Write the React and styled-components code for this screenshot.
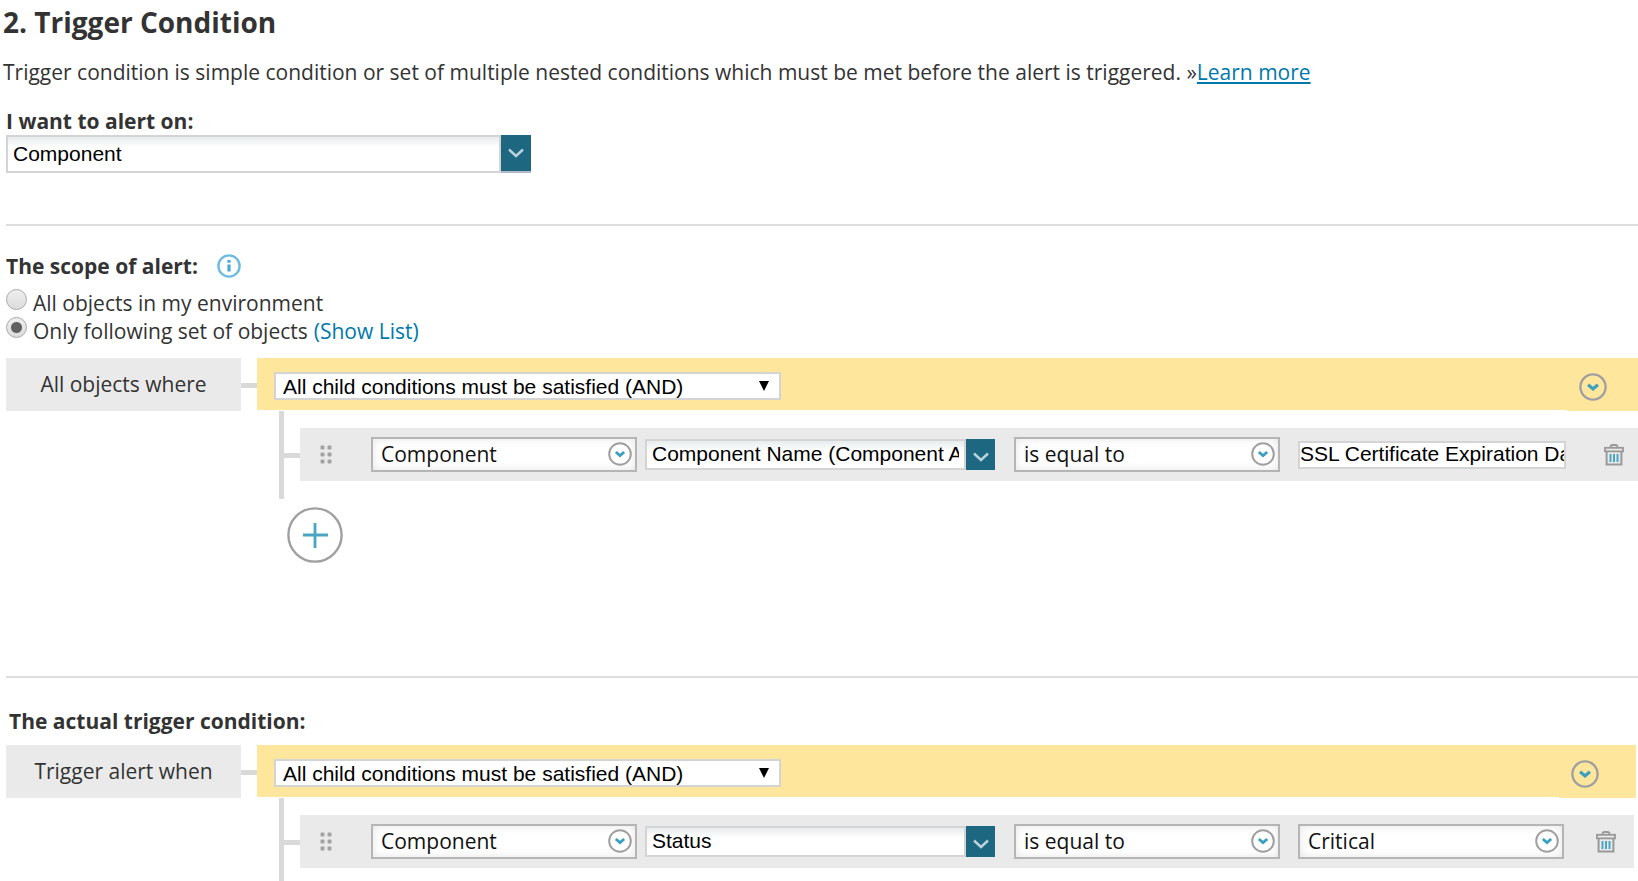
import { useState } from "react";
import styled, { createGlobalStyle } from "styled-components";

function ChevronIcon(){
    return(
        <svg width="16" height="10" viewBox="0 0 16 10" fill="none" aria-hidden="true">
            <path d="M1 1.5L8 8L15 1.5" stroke="#b9d3dc" strokeWidth="2.4"/>
        </svg>
    );
}

function CircleArrow({ size }){
    return(
        <svg width={size} height={size} viewBox="0 0 24 24" fill="none" aria-hidden="true">
            <circle cx="12" cy="12" r="10.8" stroke="#a0a0a0" strokeWidth="2"/>
            <path d="M7.8 10L12 13.6L16.2 10" stroke="#3a9fc0" strokeWidth="2.8"/>
        </svg>
    );
}

function InfoIcon(){
    return(
        <svg width="24" height="24" viewBox="0 0 24 24" fill="none" aria-hidden="true">
            <circle cx="12" cy="12" r="10.6" stroke="#6cbbe0" strokeWidth="2.4"/>
            <path d="M12 6V8.8M12 10.4V17.6" stroke="#4aa9d6" strokeWidth="3.2"/>
        </svg>
    );
}

function GripIcon(){
    return(
        <svg width="12" height="19" viewBox="0 0 12 19" fill="#a3a3a3" aria-hidden="true">
            {[0, 7, 14].map((y) => (
                <g key={y}>
                    <rect x="0.5" y={y + 0.5} width="4" height="4" rx="1"/>
                    <rect x="7.5" y={y + 0.5} width="4" height="4" rx="1"/>
                </g>
            ))}
        </svg>
    );
}

function PlusIcon(){
    return(
        <svg width="56" height="56" viewBox="0 0 56 56" fill="none" aria-hidden="true">
            <circle cx="28" cy="28" r="26.6" stroke="#a0a0a0" strokeWidth="2.4"/>
            <path d="M28 16V41M16 28H41" stroke="#4aa5c4" strokeWidth="2.8"/>
        </svg>
    );
}

function TrashIcon(){
    return(
        <svg width="20" height="22" viewBox="0 0 20 22" fill="none" aria-hidden="true">
            <path d="M6.5 4V3Q6.5 1 8.5 1H11.5Q13.5 1 13.5 3V4" stroke="#999" strokeWidth="1.8"/>
            <rect x="1" y="3.8" width="18" height="3.6" stroke="#999" strokeWidth="1.8"/>
            <path d="M2.6 8V20.6H17.4V8" stroke="#999" strokeWidth="2"/>
            <path d="M6.5 10V18M10 10V18M13.5 10V18" stroke="#4aa5c4" strokeWidth="2"/>
        </svg>
    );
}

function Combo({ id, label, value, wide }){
    const [text, setText] = useState(value);
    return(
        <ComboBox $wide={wide}>
            <ComboInput id={id} aria-label={label} value={text} $wide={wide} onChange={(e) => setText(e.target.value)}/>
            <ComboButton type="button" aria-label="Show options" $wide={wide}><ChevronIcon/></ComboButton>
        </ComboBox>
    );
}

function Picker({ label, value }){
    return(
        <PickerBox>
            <PickerSelect aria-label={label} defaultValue={value}>
                <option>{value}</option>
            </PickerSelect>
            <PickerArrow><CircleArrow size={24}/></PickerArrow>
        </PickerBox>
    );
}

function Group({ title, inset, children }){
    return(
        <GroupBox>
            <GroupLabel>{title}</GroupLabel>
            <Branch/>
            <GroupBody>
                <GroupHead $inset={inset}>
                    <HeadMain>
                        <OperatorBox>
                            <Operator aria-label={title} defaultValue="and">
                                <option value="and">All child conditions must be satisfied (AND)</option>
                                <option value="or">At least one child condition must be satisfied (OR)</option>
                            </Operator>
                            <OperatorArrow width="10" height="10" viewBox="0 0 10 10" aria-hidden="true">
                                <path d="M0 0H10L5 10Z"/>
                            </OperatorArrow>
                        </OperatorBox>
                    </HeadMain>
                    <HeadAction $inset={inset}>
                        <IconButton type="button" aria-label="Group options"><CircleArrow size={28}/></IconButton>
                    </HeadAction>
                </GroupHead>
                {children}
            </GroupBody>
        </GroupBox>
    );
}

function Condition({ field, inset, children }){
    return(
        <ConditionLine $inset={inset}>
            <Branch/>
            <Row $inset={inset}>
                <Grip><GripIcon/></Grip>
                <Picker label="Object type" value="Component"/>
                <Combo label="Property" value={field}/>
                <Spaced><Picker label="Comparison" value="is equal to"/></Spaced>
                {children}
                <Trash type="button" aria-label="Delete condition" $inset={inset}><TrashIcon/></Trash>
            </Row>
        </ConditionLine>
    );
}

function App(){
    const [scope, setScope] = useState("set");
    const [target, setTarget] = useState("SSL Certificate Expiration Date Monitor");
    return(
        <Page>
            <GlobalStyle/>
            <Title>2. Trigger Condition</Title>
            <Intro>
                Trigger condition is simple condition or set of multiple nested conditions which must be met before the alert is triggered. »<Learn href="#learn">Learn more</Learn>
            </Intro>
            <Content>
                <Label htmlFor="alert-on">I want to alert on:</Label>
                <Combo id="alert-on" value="Component" wide/>
                <Divider $top={51}/>
                <ScopeTitle>
                    <Subtitle>The scope of alert:</Subtitle>
                    <IconButton type="button" aria-label="About the scope"><InfoIcon/></IconButton>
                </ScopeTitle>
                <Option>
                    <Radio id="scope-all" name="scope" checked={scope === "all"} onChange={() => setScope("all")}/>
                    <label htmlFor="scope-all">All objects in my environment</label>
                </Option>
                <Option>
                    <Radio id="scope-set" name="scope" checked={scope === "set"} onChange={() => setScope("set")}/>
                    <label htmlFor="scope-set">Only following set of objects</label>
                    <ShowList href="#list">(Show List)</ShowList>
                </Option>
                <ScopeGroup>
                    <Group title="All objects where">
                        <Tree $bottom={18}>
                            <Condition field="Component Name (Component Availability)">
                                <ValueInput aria-label="Value" value={target} onChange={(e) => setTarget(e.target.value)}/>
                            </Condition>
                        </Tree>
                        <AddButton type="button" aria-label="Add condition"><PlusIcon/></AddButton>
                    </Group>
                </ScopeGroup>
                <Divider $top={113}/>
                <ActualTitle>The actual trigger condition:</ActualTitle>
                <Group title="Trigger alert when" inset>
                    <Tree $bottom={13}>
                        <Condition field="Status" inset>
                            <Picker label="Value" value="Critical"/>
                        </Condition>
                    </Tree>
                </Group>
            </Content>
        </Page>
    );
}
export default App;

const GlobalStyle = createGlobalStyle`
    *{
        box-sizing:border-box;
    }
    body{
        margin:0;
        background-color:#fff;
        color:#333;
        font-family:"Open Sans", sans-serif;
        font-size:21px;
        line-height:28px;
    }
`
const Page = styled.main`
    padding-top:3px;
`
const Title = styled.h1`
    margin:0 0 17px 3px;
    font-size:28px;
    line-height:38px;
    font-weight:700;
`
const Intro = styled.p`
    margin:0 0 21px 3px;
`
const Learn = styled.a`
    color:#0079aa;
    text-decoration:underline;
`
const ShowList = styled.a`
    color:#0079aa;
    text-decoration:none;
    margin-left:6px;
`
const Content = styled.div`
    padding-left:6px;
`
const Label = styled.label`
    display:block;
    font-weight:700;
`
const Subtitle = styled.h2`
    margin:0;
    font-size:21px;
    line-height:28px;
    font-weight:700;
`
const ActualTitle = styled(Subtitle)`
    margin:29px 0 10px 3px;
`
const Divider = styled.hr`
    height:2px;
    border:0;
    margin:${(props) => props.$top}px 0 0;
    background-color:#dcdcdc;
`
const ScopeTitle = styled.div`
    display:flex;
    align-items:center;
    gap:19px;
    margin:26px 0 9px;
`
const IconButton = styled.button`
    display:flex;
    padding:0;
    border:0;
    background:none;
    cursor:pointer;
`
const Option = styled.div`
    display:flex;
    align-items:flex-start;
`
const Radio = styled.input.attrs({ type: "radio" })`
    appearance:none;
    width:21px;
    height:21px;
    margin:0 6px 0 0;
    border:1px solid #a8a8a8;
    border-radius:50%;
    background:linear-gradient(#eee, #dcdcdc);
    &:checked{
        background:radial-gradient(circle, #606060 5px, transparent 6px), linear-gradient(#eee, #dcdcdc);
    }
`
const ComboBox = styled.div`
    display:flex;
    flex:${(props) => props.$wide ? "none" : "1 1 350px"};
    min-width:0;
    width:${(props) => props.$wide ? "525px" : "auto"};
    max-width:100%;
    height:${(props) => props.$wide ? 38 : 31}px;
    margin-left:${(props) => props.$wide ? 0 : 8}px;
`
const ComboInput = styled.input`
    flex:1;
    min-width:0;
    padding:0 5px ${(props) => props.$wide ? 0 : 2}px;
    border:2px solid #d4d4d4;
    border-radius:0;
    background:linear-gradient(#e8eced, #fff 10px);
    color:#000;
    font-family:"Liberation Sans", Arial, sans-serif;
    font-size:21px;
`
const ComboButton = styled.button`
    display:flex;
    align-items:center;
    justify-content:center;
    width:${(props) => props.$wide ? 30 : 29}px;
    padding:${(props) => props.$wide ? 0 : "5px 0 0"};
    border:0;
    border-bottom:${(props) => props.$wide ? "2px solid #b4b9c8" : 0};
    background-color:#1d6780;
    cursor:pointer;
`
const ScopeGroup = styled.div`
    margin-top:13px;
`
const GroupBox = styled.section`
    display:flex;
`
const GroupLabel = styled.div`
    display:flex;
    align-items:center;
    justify-content:center;
    flex:none;
    width:235px;
    height:53px;
    padding-bottom:2px;
    background-color:#eaeaea;
`
const Branch = styled.div`
    flex:none;
    width:16px;
    height:5px;
    margin-top:25px;
    background-color:#d9d9d9;
`
const GroupBody = styled.div`
    flex:1;
    min-width:0;
`
const GroupHead = styled.div`
    display:flex;
    align-items:flex-start;
    height:53px;
    margin-right:${(props) => props.$inset ? 2 : 0}px;
`
const HeadMain = styled.div`
    flex:1;
    height:52px;
    padding:14px 17px;
    background-color:#ffe69d;
`
const HeadAction = styled.div`
    flex:none;
    width:${(props) => props.$inset ? 77 : 71}px;
    height:53px;
    padding:15px 0 0 12px;
    background-color:#ffe69d;
`
const OperatorBox = styled.div`
    position:relative;
    width:507px;
    max-width:100%;
`
const Operator = styled.select`
    appearance:none;
    display:block;
    width:100%;
    height:28px;
    padding:0 30px 0 7px;
    border:2px solid #d4d4d4;
    border-radius:0;
    background-color:#fff;
    color:#000;
    font-family:"Liberation Sans", Arial, sans-serif;
    font-size:21px;
`
const OperatorArrow = styled.svg`
    position:absolute;
    top:9px;
    right:12px;
    pointer-events:none;
`
const Tree = styled.div`
    margin-left:22px;
    padding:17px 0 ${(props) => props.$bottom}px;
    border-left:5px solid #d9d9d9;
`
const ConditionLine = styled.div`
    display:flex;
    margin-right:${(props) => props.$inset ? 4 : 0}px;
`
const Row = styled.div`
    display:flex;
    align-items:center;
    flex:1;
    min-width:0;
    height:53px;
    padding:0 ${(props) => props.$inset ? 18 : 14}px 0 20px;
    background-color:#eaeaea;
`
const Grip = styled.span`
    display:flex;
    margin-right:39px;
    cursor:move;
`
const PickerBox = styled.div`
    position:relative;
    flex:1 1 266px;
    min-width:0;
`
const PickerSelect = styled.select`
    appearance:none;
    display:block;
    width:100%;
    height:35px;
    padding:0 36px 2px 8px;
    border:2px solid #b5b5b5;
    border-radius:0;
    background-color:#fff;
    box-shadow:inset 0 0 8px #e4e4e4;
    color:#111;
    font-family:"Open Sans", sans-serif;
    font-size:21px;
    line-height:28px;
`
const PickerArrow = styled.span`
    position:absolute;
    top:5px;
    right:5px;
    display:flex;
    pointer-events:none;
`
const Spaced = styled.div`
    display:flex;
    flex:1 1 266px;
    min-width:0;
    margin:0 18px 0 19px;
`
const ValueInput = styled.input`
    flex:1 1 268px;
    min-width:0;
    height:28px;
    padding:0 0 2px;
    border:2px solid #d4d4d4;
    border-radius:0;
    color:#000;
    font-family:"Liberation Sans", Arial, sans-serif;
    font-size:21px;
`
const Trash = styled(IconButton)`
    flex:none;
    margin-left:${(props) => props.$inset ? 32 : 38}px;
`
const AddButton = styled(IconButton)`
    margin:8px 0 0 30px;
    border-radius:50%;
`
